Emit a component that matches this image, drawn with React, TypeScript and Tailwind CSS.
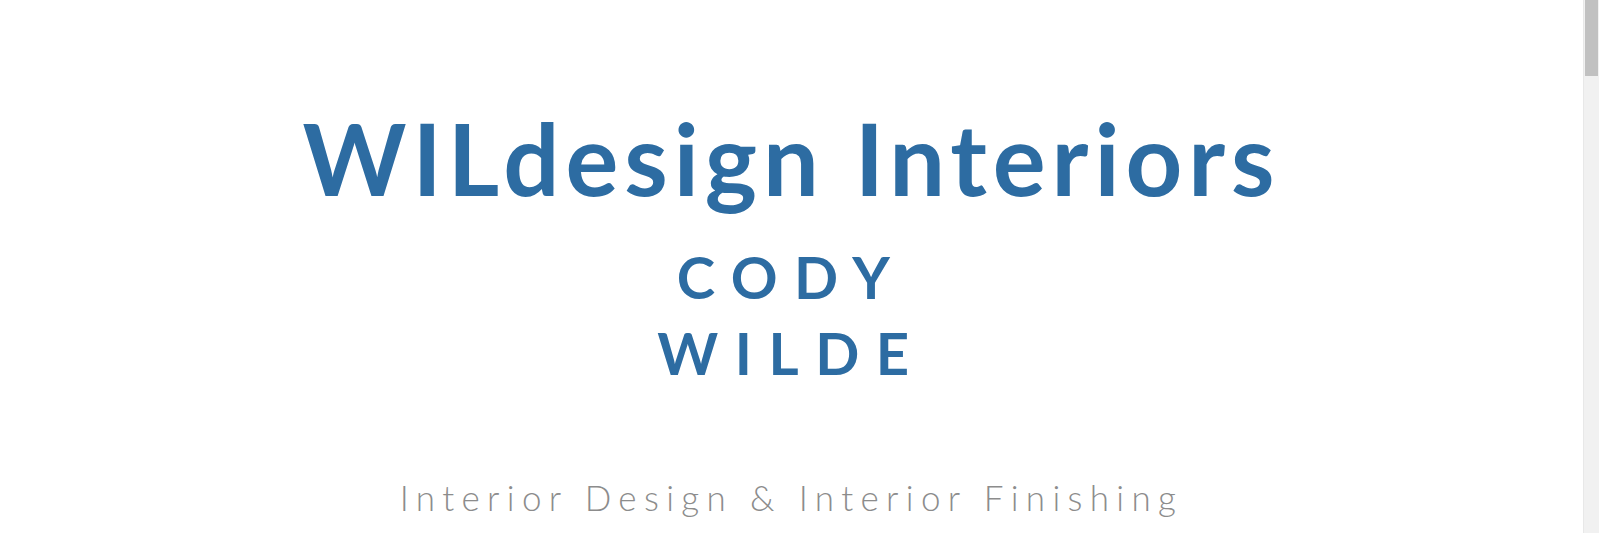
export default function App() {
  return (
    <div className="flex h-[533px] overflow-hidden bg-white font-['Lato','Liberation_Sans',sans-serif]">
      <main className="flex flex-1 flex-col items-center pt-[108px]">
        <h1 className="text-[99px] font-bold leading-none tracking-[0.06em] text-[#2d6ca2]">
          WILdesign Interiors
        </h1>
        <div className="mt-[41px] flex flex-col items-center gap-[18px] text-[58px] font-bold leading-none tracking-[0.285em] text-[#2d6ca2]">
          <span>CODY</span>
          <span>WILDE</span>
        </div>
        <p className="mt-[98px] text-[35px] font-light leading-none tracking-[0.21em] text-[#8c8c8c]">
          Interior Design &amp; Interior Finishing
        </p>
      </main>
      {/* scroll rail */}
      <aside className="flex w-[16px] shrink-0 flex-col border-l border-[#e8e8e8] bg-[#f1f1f1] pl-[1px] pr-[1px]">
        <div className="h-[76px] w-full bg-[#c1c1c1]" />
      </aside>
    </div>
  );
}
